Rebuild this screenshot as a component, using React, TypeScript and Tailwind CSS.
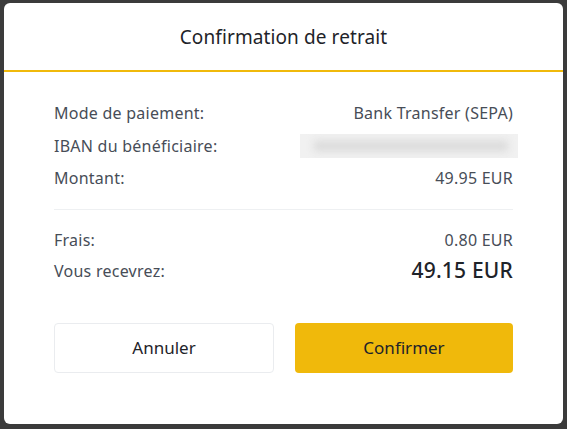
export default function App() {
  const rows = [
    { label: "Mode de paiement:", value: "Bank Transfer (SEPA)" },
    { label: "IBAN du bénéficiaire:", value: null },
    { label: "Montant:", value: "49.95 EUR" },
  ];

  return (
    <div
      className="w-[567px] h-[429px] bg-[#3b3b3b] pt-[3px] pl-[4px] overflow-hidden"
      style={{ fontFamily: "'Noto Sans', Inter, sans-serif" }}
    >
      <div className="w-[559px] h-[421px] bg-white rounded-[6px] flex flex-col">
        <div className="h-[69px] flex items-center justify-center border-b-2 border-[#f0b90b]">
          <h2 className="text-[19px] text-[#1e2329] font-normal pt-[1px] tracking-[0.1px]">Confirmation de retrait</h2>
        </div>

        <div className="px-[50px] pt-[25px]">
          {rows.map((row) => (
            <div key={row.label} className="h-[32.5px] flex items-center justify-between text-[16px] tracking-[0.25px] text-[#474d57]">
              <span>{row.label}</span>
              {row.value ? (
                <span>{row.value}</span>
              ) : (
                <div className="relative w-[218px] h-[24px] -mr-[5px] bg-[#f1f1f1] overflow-hidden">
                  <div className="absolute inset-y-[7px] left-[14px] right-[10px] bg-[#d9d9d9] blur-[4px]" />
                </div>
              )}
            </div>
          ))}

          <div className="h-px bg-[#eef0f2] mt-[14px] mb-[15px]" />

          <div className="h-[31px] flex items-center justify-between text-[16px] tracking-[0.25px] text-[#474d57]">
            <span>Frais:</span>
            <span>0.80 EUR</span>
          </div>
          <div className="h-[31px] flex items-center justify-between">
            <span className="text-[16px] tracking-[0.25px] text-[#474d57]">Vous recevrez:</span>
            <span className="text-[21px] font-medium text-[#1e2329] tracking-[0.2px]">49.15 EUR</span>
          </div>

          <div className="mt-[36px] flex gap-[21px]">
            <button className="flex-1 h-[50px] rounded-[4px] border border-[#eaecef] bg-white text-[17px] text-[#1e2329]">
              Annuler
            </button>
            <button className="flex-1 h-[50px] rounded-[4px] bg-[#f0b90b] text-[17px] text-[#1e2329]">
              Confirmer
            </button>
          </div>
        </div>
      </div>
    </div>
  );
}
